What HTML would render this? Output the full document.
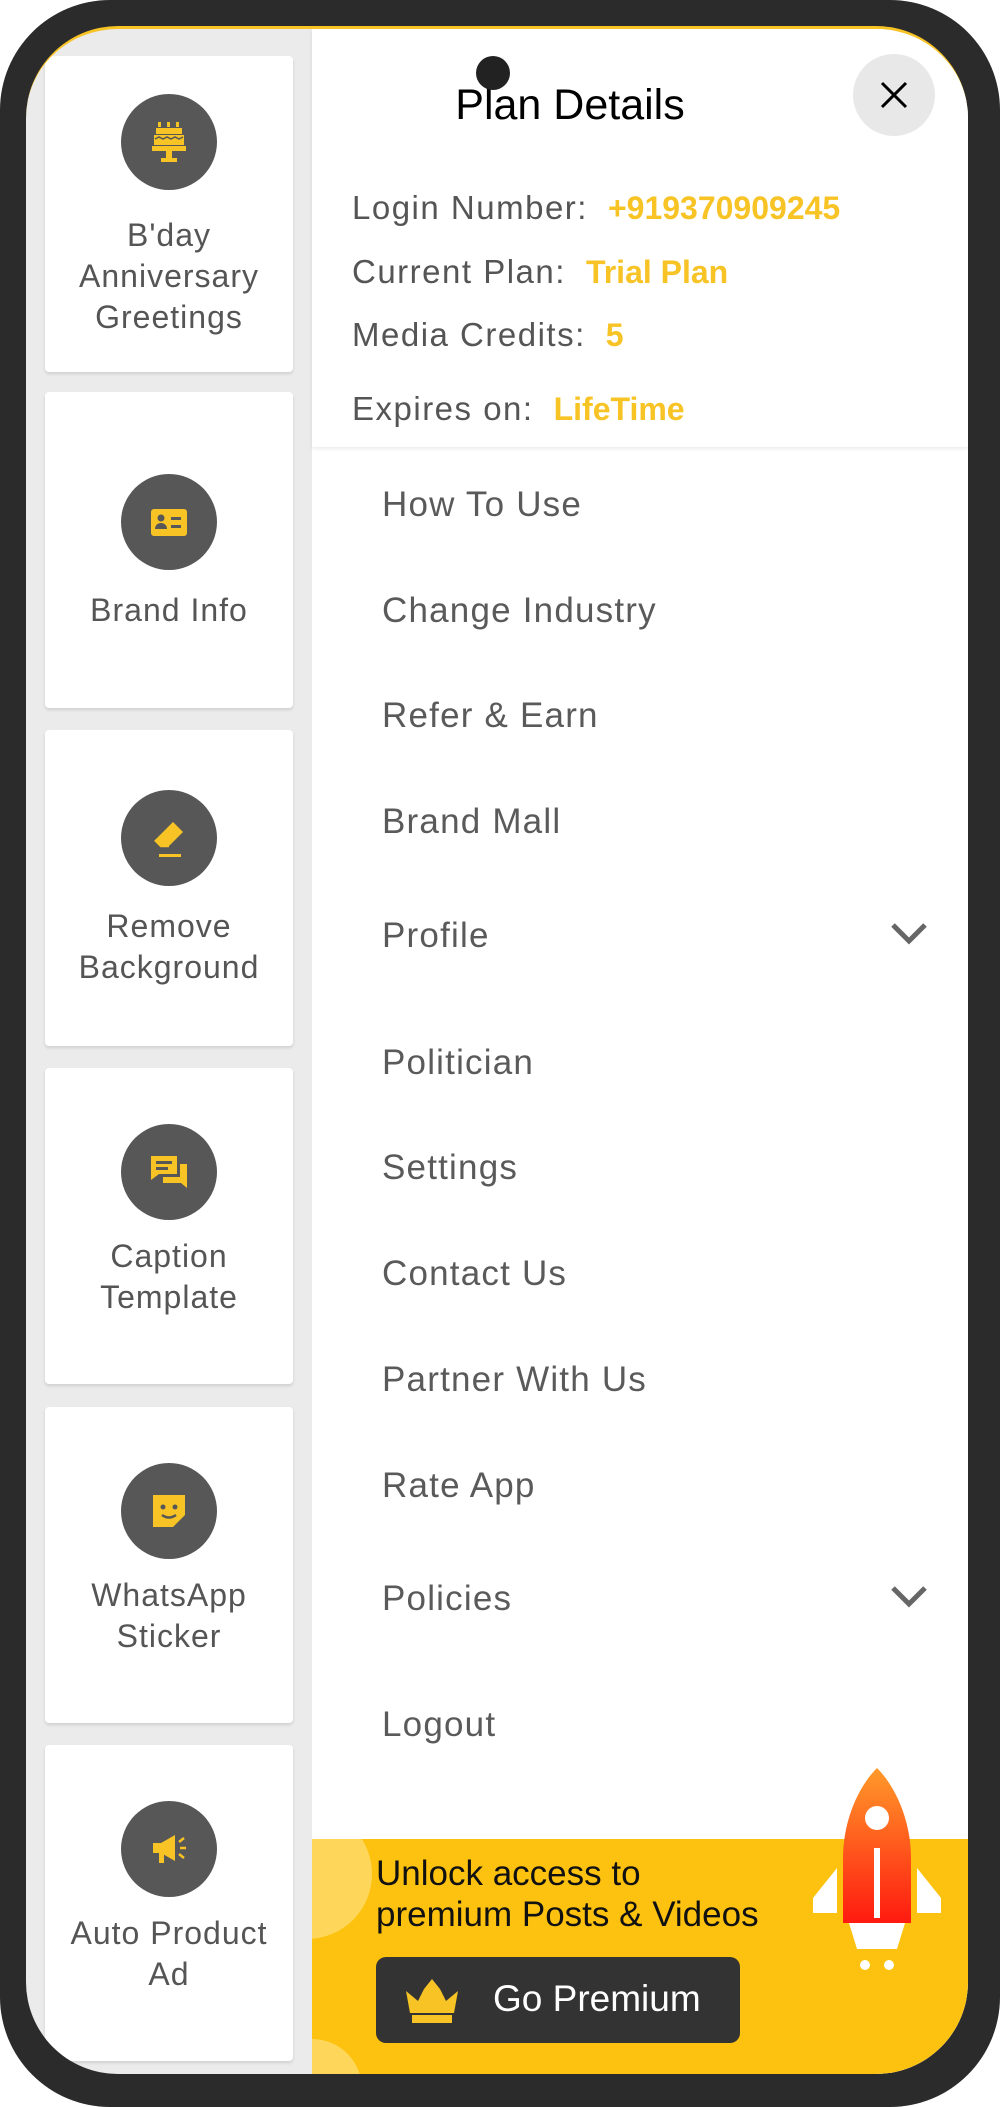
<!DOCTYPE html>
<html><head><meta charset="utf-8"><style>
*{margin:0;padding:0;box-sizing:border-box}
body{width:1000px;height:2107px;background:#fff;position:relative;overflow:hidden;font-family:"Liberation Sans",sans-serif}
.frame{position:absolute;left:0;top:0;width:1000px;height:2107px;background:#2b2b2b;border-radius:110px}
.screen{position:absolute;left:26px;top:26px;width:942px;height:2048px;border-radius:92px;overflow:hidden;background:#ebebeb;border-top:3px solid #f7c325}
.card{position:absolute;left:19px;width:248px;height:316px;background:#fff;border-radius:4px;box-shadow:0 2px 3px rgba(0,0,0,.12)}
.circ{position:absolute;left:76px;width:96px;height:96px;border-radius:50%;background:#575757}
.circ svg{position:absolute;left:24px;top:24px;width:48px;height:48px}
.lbl{position:absolute;left:-10px;width:268px;text-align:center;color:#555;font-size:32px;letter-spacing:1px;line-height:41px}
.panel{position:absolute;left:286px;top:0;width:656px;height:2048px;background:#fff}
.hdr{position:absolute;left:0;top:0;width:656px;height:418px;background:#fff;box-shadow:0 2px 4px rgba(0,0,0,.08)}
.row{position:absolute;left:40px;font-size:33px;letter-spacing:1.5px;color:#555;white-space:nowrap}
.row b{color:#f7c325;font-weight:bold;margin-left:20px;letter-spacing:0;font-size:32px}
.mi{position:absolute;left:70px;font-size:35px;letter-spacing:1.2px;color:#5a5a5a;white-space:nowrap}
.chev{position:absolute;left:577px;width:40px;height:26px}
</style></head><body>
<div class="frame"></div>
<div class="screen">
 <div class="card" style="top:27px"><div class="circ" style="top:38px"><svg viewBox="0 0 48 48"><rect x="13" y="4" width="3" height="5" fill="#f7c325"/><rect x="22" y="4" width="3" height="5" fill="#f7c325"/><rect x="31" y="4" width="3" height="5" fill="#f7c325"/><rect x="11" y="10" width="26" height="6" fill="#f7c325"/><rect x="9" y="17" width="30" height="10" fill="#f7c325"/><polyline points="10,21 14,19 18,21 22,19 26,21 30,19 34,21 38,19" stroke="#575757" stroke-width="1.5" fill="none"/><rect x="7" y="28" width="34" height="5" fill="#f7c325"/><rect x="21" y="33" width="6" height="7" fill="#f7c325"/><rect x="16" y="40" width="16" height="4" fill="#f7c325"/></svg></div><div class="lbl" style="top:159px">B'day<br>Anniversary<br>Greetings</div></div>
 <div class="card" style="top:363px"><div class="circ" style="top:82px"><svg viewBox="0 0 48 48"><rect x="6" y="11" width="36" height="27" rx="3" fill="#f7c325"/><circle cx="16" cy="20" r="3.5" fill="#575757"/><path d="M10 31c0-4 3-6 6-6s6 2 6 6z" fill="#575757"/><rect x="26" y="19" width="10" height="3" fill="#575757"/><rect x="26" y="27" width="10" height="3" fill="#575757"/></svg></div><div class="lbl" style="top:198px">Brand Info</div></div>
 <div class="card" style="top:701px"><div class="circ" style="top:60px"><svg viewBox="0 0 48 48"><path d="M28 8l10 10-14 14H16l-6-6z" fill="#f7c325"/><path d="M10 26l6 6h8" stroke="#f7c325" stroke-width="2.5" fill="none"/><rect x="14" y="40" width="22" height="3" fill="#f7c325"/></svg></div><div class="lbl" style="top:176px">Remove<br>Background</div></div>
 <div class="card" style="top:1039px"><div class="circ" style="top:56px"><svg viewBox="0 0 48 48"><path d="M6 8h26v18H14l-8 6z" fill="#f7c325"/><rect x="11" y="13" width="16" height="3" fill="#575757"/><rect x="11" y="19" width="12" height="3" fill="#575757"/><path d="M35 16h7v24l-6-5H18v-6h17z" fill="#f7c325"/></svg></div><div class="lbl" style="top:168px">Caption<br>Template</div></div>
 <div class="card" style="top:1378px"><div class="circ" style="top:56px"><svg viewBox="0 0 48 48"><path d="M8 8h32v20L28 40H8z" fill="#f7c325"/><circle cx="18" cy="20" r="2.5" fill="#575757"/><circle cx="30" cy="20" r="2.5" fill="#575757"/><path d="M17 28q7 5 14 0" stroke="#575757" stroke-width="2.5" fill="none"/></svg></div><div class="lbl" style="top:168px">WhatsApp<br>Sticker</div></div>
 <div class="card" style="top:1716px"><div class="circ" style="top:56px"><svg viewBox="0 0 48 48"><path d="M8 18h8l14-8v26l-14-8H8z" fill="#f7c325"/><rect x="14" y="28" width="5" height="10" fill="#f7c325"/><path d="M34 17l5-4M35 23h6M34 29l5 4" stroke="#f7c325" stroke-width="2.5"/></svg></div><div class="lbl" style="top:168px">Auto Product<br>Ad</div></div>

 <div class="panel">
  <div class="hdr">
   <div style="position:absolute;left:58px;width:400px;top:52px;text-align:center;font-size:43px;color:#000">Plan Details</div>
   <div style="position:absolute;left:164px;top:27px;width:34px;height:34px;border-radius:50%;background:#222"></div>
   <div style="position:absolute;left:541px;top:25px;width:82px;height:82px;border-radius:50%;background:#e8e8e8"></div>
   <svg style="position:absolute;left:567px;top:51px" width="30" height="30" viewBox="0 0 30 30"><path d="M3 3L27 27M27 3L3 27" stroke="#000" stroke-width="3"/></svg>
   <div class="row" style="top:160px">Login Number:<b>+919370909245</b></div>
   <div class="row" style="top:224px">Current Plan:<b>Trial Plan</b></div>
   <div class="row" style="top:287px">Media Credits:<b>5</b></div>
   <div class="row" style="top:361px">Expires on:<b>LifeTime</b></div>
  </div>
  <div class="mi" style="top:456px">How To Use</div>
  <div class="mi" style="top:562px">Change Industry</div>
  <div class="mi" style="top:667px">Refer &amp; Earn</div>
  <div class="mi" style="top:773px">Brand Mall</div>
  <div class="mi" style="top:887px">Profile</div>
  <svg class="chev" style="top:892px" viewBox="0 0 40 26"><path d="M4 4l16 16 16-16" stroke="#666" stroke-width="5" fill="none"/></svg>
  <div class="mi" style="top:1014px">Politician</div>
  <div class="mi" style="top:1119px">Settings</div>
  <div class="mi" style="top:1225px">Contact Us</div>
  <div class="mi" style="top:1331px">Partner With Us</div>
  <div class="mi" style="top:1437px">Rate App</div>
  <div class="mi" style="top:1550px">Policies</div>
  <svg class="chev" style="top:1555px" viewBox="0 0 40 26"><path d="M4 4l16 16 16-16" stroke="#666" stroke-width="5" fill="none"/></svg>
  <div class="mi" style="top:1676px">Logout</div>
  <div style="position:absolute;left:0;top:1810px;width:656px;height:238px;background:#fdc20f;overflow:hidden">
   <div style="position:absolute;left:-70px;top:-30px;width:130px;height:130px;border-radius:50%;background:#fed75a"></div>
   <div style="position:absolute;left:-50px;top:200px;width:100px;height:100px;border-radius:50%;background:#fed75a"></div>
   <div style="position:absolute;left:260px;top:-22px;font-size:24px;color:#222">Follow Us</div>
   <div style="position:absolute;left:64px;top:14px;font-size:35px;line-height:41px;color:#111;font-weight:500">Unlock access to<br>premium Posts &amp; Videos</div>
   <div style="position:absolute;left:64px;top:118px;width:364px;height:86px;background:#333;border-radius:10px">
    <svg style="position:absolute;left:26px;top:20px" width="60" height="48" viewBox="0 0 60 48"><path d="M4 14l12 10 6-12 8-10 8 10 6 12 12-10-4 22H8z" fill="#f7c325"/><rect x="10" y="38" width="40" height="8" fill="#f7c325"/></svg>
    <div style="position:absolute;left:117px;top:21px;font-size:37px;color:#fff;font-weight:500">Go Premium</div>
   </div>
  </div>
  <svg style="position:absolute;left:501px;top:1739px" width="128" height="210" viewBox="0 0 128 210"><defs><linearGradient id="g" x1="0" y1="0" x2="0" y2="1"><stop offset="0" stop-color="#ff9a2a"/><stop offset="1" stop-color="#ff1a10"/></linearGradient></defs><path d="M0 130l24-30v45H0z" fill="#fff"/><path d="M128 130l-24-30v45h24z" fill="#fff"/><path d="M64 0C44 20 30 55 30 90v65h68V90C98 55 84 20 64 0z" fill="url(#g)"/><circle cx="64" cy="50" r="12" fill="#fff"/><rect x="61" y="80" width="6" height="70" fill="#fff"/><path d="M36 155h56l-8 26H44z" fill="#fff"/><circle cx="52" cy="197" r="5" fill="#fff"/><circle cx="76" cy="197" r="5" fill="#fff"/></svg>
 </div>
</div>
</body></html>
